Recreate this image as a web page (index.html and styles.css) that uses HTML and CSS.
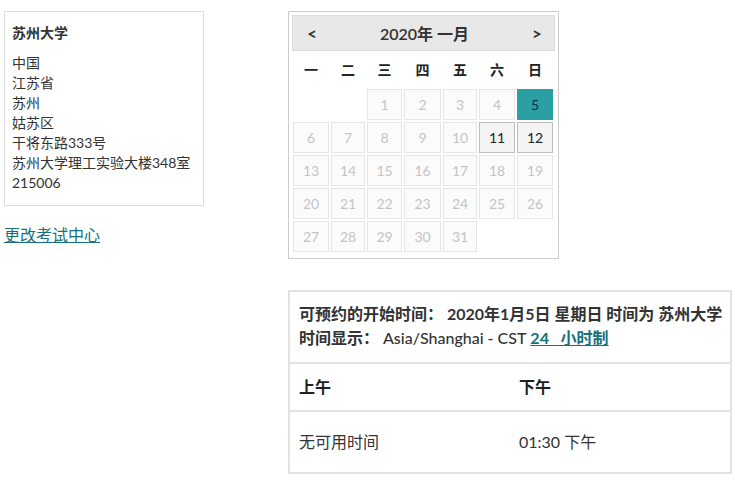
FILE: index.html
```html
<!DOCTYPE html>
<html lang="zh">
<head>
<meta charset="utf-8">
<title>预约考试</title>
<link rel="stylesheet" href="styles.css">
</head>
<body>
<div class="page">
  <div class="left-col">
    <div class="address">
      <div class="addr-title">苏州大学</div>
      <div class="addr-lines">
        <div>中国</div>
        <div>江苏省</div>
        <div>苏州</div>
        <div>姑苏区</div>
        <div>干将东路333号</div>
        <div>苏州大学理工实验大楼348室</div>
        <div>215006</div>
      </div>
    </div>
    <a class="change-link" href="#">更改考试中心</a>
  </div>
  <div class="right-col">
    <div class="calendar">
      <div class="cal-head">
        <span class="nav">&lt;</span>
        <span class="month">2020年 一月</span>
        <span class="nav">&gt;</span>
      </div>
      <div class="cal-grid">
        <div class="wd">一</div><div class="wd">二</div><div class="wd">三</div><div class="wd">四</div><div class="wd">五</div><div class="wd">六</div><div class="wd">日</div>
        <div class="empty"></div><div class="empty"></div>
        <div class="day">1</div><div class="day">2</div><div class="day">3</div><div class="day">4</div><div class="day selected">5</div>
        <div class="day">6</div><div class="day">7</div><div class="day">8</div><div class="day">9</div><div class="day">10</div><div class="day avail">11</div><div class="day avail">12</div>
        <div class="day">13</div><div class="day">14</div><div class="day">15</div><div class="day">16</div><div class="day">17</div><div class="day">18</div><div class="day">19</div>
        <div class="day">20</div><div class="day">21</div><div class="day">22</div><div class="day">23</div><div class="day">24</div><div class="day">25</div><div class="day">26</div>
        <div class="day">27</div><div class="day">28</div><div class="day">29</div><div class="day">30</div><div class="day">31</div>
      </div>
    </div>
    <div class="times">
      <div class="times-head">
        <div class="line">可预约的开始时间： 2020年1月5日 星期日 时间为 苏州大学</div>
        <div class="line">时间显示： <span class="tz">Asia/Shanghai - CST</span> <a class="fmt" href="#">24&nbsp;&nbsp;&nbsp;小时制</a></div>
      </div>
      <div class="times-row head-row">
        <div class="cell">上午</div>
        <div class="cell">下午</div>
      </div>
      <div class="times-row body-row">
        <div class="cell">无可用时间</div>
        <div class="cell">01:30 下午</div>
      </div>
    </div>
  </div>
</div>
</body>
</html>
```
FILE: styles.css
```css
html, body {
  margin: 0;
  padding: 0;
  background: #fff;
}
body {
  font-family: "Lato", "Noto Sans CJK SC", sans-serif;
  color: #333;
}
.page {
  display: flex;
  padding: 11px 4px 0 4px;
}
.left-col {
  width: 284px;
  flex: none;
  display: flex;
  flex-direction: column;
  align-items: flex-start;
}
.address {
  width: 184px;
  border: 1px solid #dddddd;
  padding: 11px 7px 12px 7px;
  font-size: 14px;
  line-height: 20px;
}
.addr-title {
  font-weight: 700;
  margin-bottom: 10px;
}
.change-link {
  margin-top: 19px;
  font-size: 16px;
  line-height: 20px;
  color: #17707a;
  text-decoration: underline;
}
.right-col {
  display: flex;
  flex-direction: column;
  align-items: flex-start;
}
.calendar {
  width: 263px;
  border: 1px solid #cccccc;
  padding: 3px 3px 6px 3px;
}
.cal-head {
  height: 34px;
  background: #e8e8e8;
  border: 1px solid #dddddd;
  display: flex;
  align-items: center;
  justify-content: space-between;
  padding: 0 12px 0 14px;
  font-size: 16px;
  font-weight: 700;
  color: #333;
}
.cal-head .nav {
  font-size: 17px;
  font-weight: 700;
}
.cal-head .month {
  font-weight: 600;
}
.cal-grid {
  display: grid;
  grid-template-columns: 36px 34px 35px 37px 34px 36px 36px;
  grid-template-rows: 36px repeat(5, 31px);
  gap: 2px;
  padding-left: 1px;
}
.wd {
  display: flex;
  align-items: center;
  justify-content: center;
  font-size: 14px;
  font-weight: 700;
  color: #222;
}
.day {
  display: flex;
  align-items: center;
  justify-content: center;
  border: 1px solid #e6e6e6;
  background: #fbfbfb;
  color: #c4c4c4;
  font-size: 14px;
}
.day.avail {
  border-color: #bdbdbd;
  background: #f4f4f4;
  color: #222;
}
.day.selected {
  border-color: #2a9fa4;
  background: #2a9fa4;
  color: #1b2a4e;
}
.times {
  margin-top: 31px;
  width: 440px;
  border: 2px solid #e2e2e2;
}
.times-head {
  padding: 10px 9px 12px 9px;
  font-size: 16px;
  line-height: 24px;
  font-weight: 700;
  color: #333;
}
.times-head .line {
  white-space: nowrap;
}
.times-head .tz {
  font-weight: 500;
}
.fmt {
  color: #17707a;
  text-decoration: underline;
  font-weight: 700;
}
.times-row {
  display: grid;
  grid-template-columns: 1fr 1fr;
  border-top: 2px solid #e2e2e2;
  font-size: 16px;
  line-height: 22px;
}
.head-row {
  padding: 12px 0;
  font-weight: 700;
  color: #222;
}
.body-row {
  padding: 19px 0 19px 0;
  color: #333;
}
.cell {
  padding: 0 9px;
}
```
